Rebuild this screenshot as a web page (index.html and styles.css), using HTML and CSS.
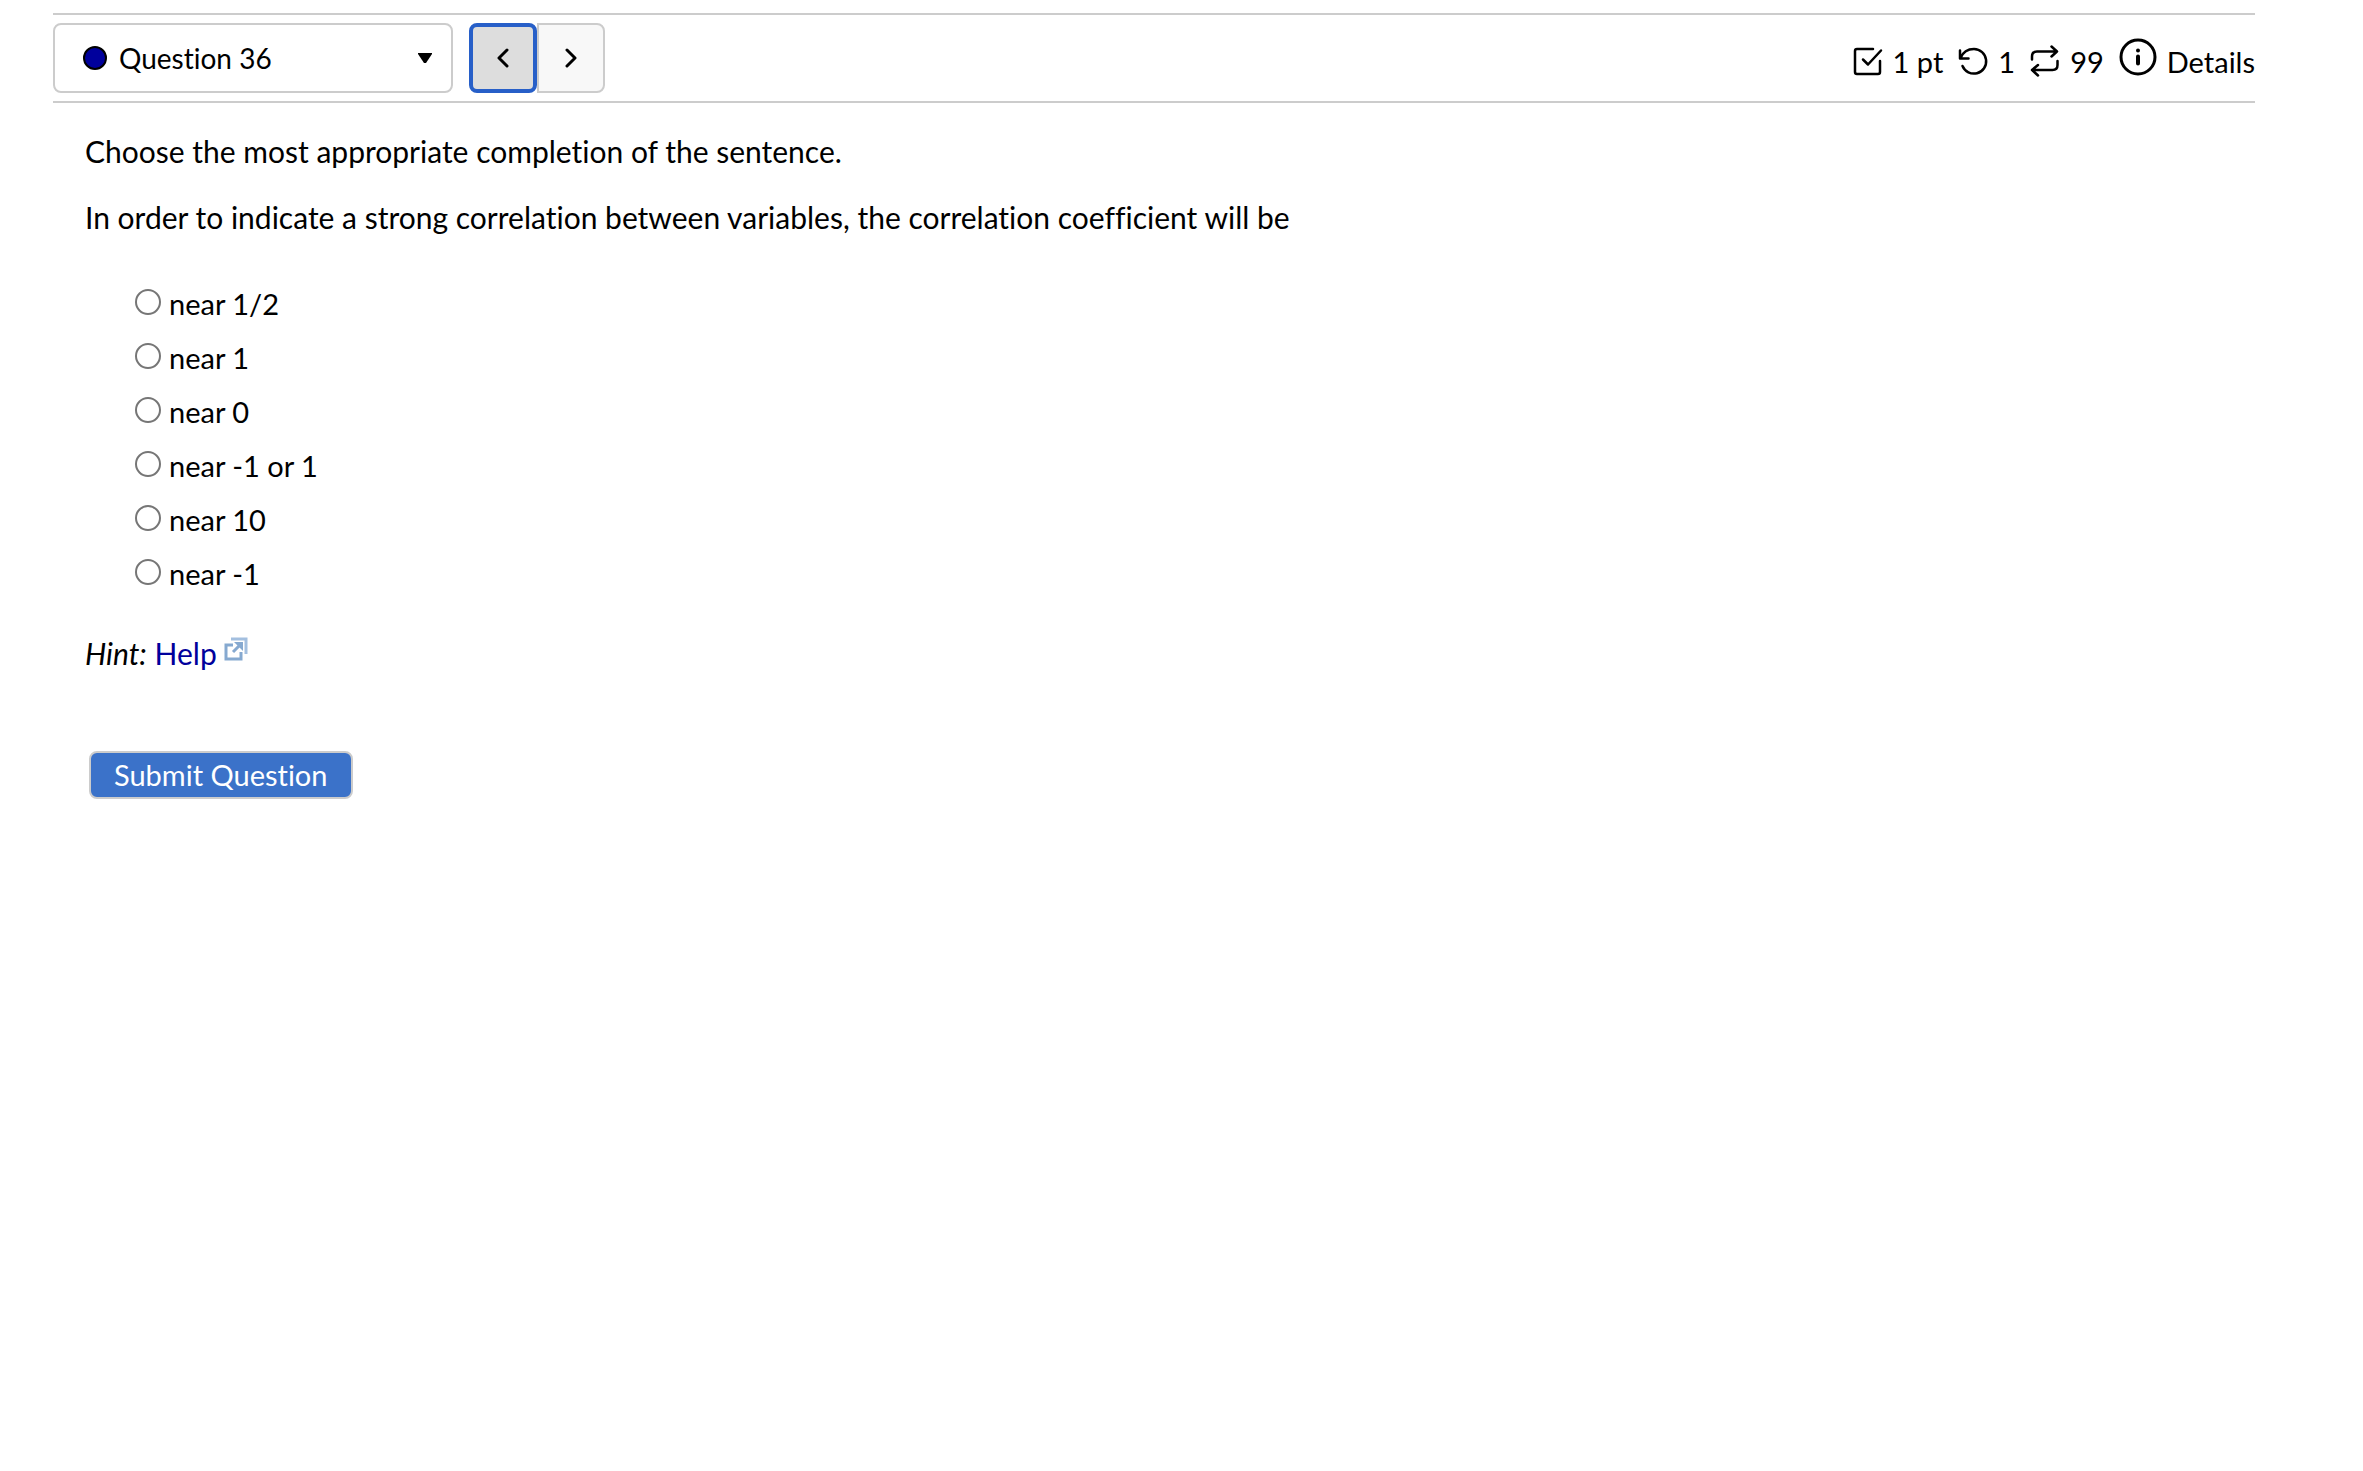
FILE: index.html
```html
<!DOCTYPE html>
<html lang="en">
<head>
    <meta charset="UTF-8">
    <meta name="viewport" content="width=device-width, initial-scale=1.0">
    <title>Question 36</title>
    <link rel="stylesheet" href="styles.css">
</head>
<body>
    <!-- Question navigation and score details -->
    <header class="question-bar">
        <div class="question-select">
            <span class="status-dot"></span>
            <select id="question" aria-label="Select question">
                <option>Question 36</option>
            </select>
            <svg class="caret" viewBox="0 0 14 12" aria-hidden="true"><path d="M0 1h14v1L8 11H6L0 2z"/></svg>
        </div>

        <div class="nav-buttons">
            <button type="button" class="nav-button active" aria-label="Previous question">
                <svg viewBox="0 0 12 20" aria-hidden="true"><path d="M10 2L2 10l8 8"/></svg>
            </button>
            <button type="button" class="nav-button" aria-label="Next question">
                <svg viewBox="0 0 12 20" aria-hidden="true"><path d="M2 2l8 8-8 8"/></svg>
            </button>
        </div>

        <div class="score">
            <span class="score-item">
                <svg class="icon" viewBox="0 0 30 34" stroke-width="2.5" aria-hidden="true"><path d="M20 4H4Q2 4 2 6V27Q2 29 4 29H25Q27 29 27 27V16M10 14.500l5 5L28 5.500"/></svg>
                1 pt
            </span>
            <span class="score-item">
                <svg class="icon" viewBox="0 0 30 34" stroke-width="2.5" aria-hidden="true"><path d="M2 5.500v8h8.500M2.500 13C5 7 10 4 16 4a12.300 12.300 0 1 1-11.500 17"/></svg>
                1
            </span>
            <span class="score-item">
                <svg class="icon" viewBox="0 0 30 34" stroke-width="2.5" aria-hidden="true"><path d="M2 14.500v-3Q2 6.500 7 6.500H27M21.500 1.500l5.500 5-5.500 5M27.500 16v4q0 5-5 5H2M8 20l-6 5 6 5.500"/></svg>
                99
            </span>
            <button type="button" class="score-item details">
                <svg class="icon info" viewBox="0 0 38 38" stroke-width="3" aria-hidden="true"><circle cx="19" cy="19" r="17"/><path d="M19 18.500v7M19 12.500v.1" stroke-width="4"/></svg>
                Details
            </button>
        </div>
    </header>

    <!-- Question text and answers -->
    <main class="question">
        <p>Choose the most appropriate completion of the sentence.</p>
        <p id="prompt">In order to indicate a strong correlation between variables, the correlation coefficient will be</p>

        <ul class="choices" role="radiogroup" aria-labelledby="prompt">
            <li><input type="radio" name="answer" id="answer-0"><label for="answer-0">near 1/2</label></li>
            <li><input type="radio" name="answer" id="answer-1"><label for="answer-1">near 1</label></li>
            <li><input type="radio" name="answer" id="answer-2"><label for="answer-2">near 0</label></li>
            <li><input type="radio" name="answer" id="answer-3"><label for="answer-3">near -1 or 1</label></li>
            <li><input type="radio" name="answer" id="answer-4"><label for="answer-4">near 10</label></li>
            <li><input type="radio" name="answer" id="answer-5"><label for="answer-5">near -1</label></li>
        </ul>

        <p class="hint">
            <em>Hint:</em>
            <a href="#help">Help <svg class="external" viewBox="0 0 24 24" aria-hidden="true"><path class="frame" d="M9 8H2v14h15v-7"/><path class="corner" d="M7 2h15v15"/><path class="arrow" d="M9 15l7-7"/><path class="head" d="M10 5h9v9z"/></svg></a>
        </p>

        <button type="button" class="submit">Submit Question</button>
    </main>
</body>
</html>
```
FILE: styles.css
```css
body {
    margin: 13px 108px 0 53px;
    font-family: "Trebuchet MS", Lato, sans-serif;
    font-size: 29px;
    font-variant-ligatures: none;
    line-height: 36px;
    color: #000;
    background: #fff;
}

button, select {
    font: inherit;
    color: inherit;
    cursor: pointer;
}

/* Top bar */
.question-bar {
    display: flex;
    align-items: center;
    padding: 8px 0;
    border-top: 2px solid #ccc;
    border-bottom: 2px solid #ccc;
}

.question-select {
    display: flex;
    align-items: center;
    box-sizing: border-box;
    width: 400px;
    height: 70px;
    padding: 0 19px 0 28px;
    border: 2px solid #ccc;
    border-radius: 8px;
}

.status-dot {
    box-sizing: border-box;
    width: 24px;
    height: 24px;
    border: 2px solid #000;
    border-radius: 50%;
    background: #00009c;
}

.question-select select {
    flex: 1;
    padding: 0 0 0 12px;
    border: none;
    font-size: 28px;
    font-variant-ligatures: none;
    background: none;
    appearance: none;
}

.caret {
    width: 14px;
    height: 12px;
}

.nav-buttons {
    display: flex;
    margin-left: 16px;
}

.nav-button {
    display: flex;
    align-items: center;
    justify-content: center;
    width: 68px;
    height: 70px;
    padding: 0;
    border: 2px solid #ccc;
    border-radius: 0 8px 8px 0;
    background: #f8f8f8;
}

.nav-button.active {
    border: 4px solid #275fc8;
    border-radius: 8px;
    background: #ddd;
}

.nav-button svg {
    width: 12px;
    height: 20px;
    fill: none;
    stroke: #000;
    stroke-width: 3;
    stroke-linecap: round;
    stroke-linejoin: round;
}

/* Points, tries and versions */
.score {
    display: flex;
    align-items: center;
    gap: 15px;
    margin-left: auto;
    padding-top: 8px;
}

.score-item {
    display: flex;
    align-items: center;
    gap: 10px;
}

.icon {
    width: 30px;
    height: 34px;
    fill: none;
    stroke: #000;
    stroke-linecap: round;
    stroke-linejoin: round;
}

.icon.info {
    width: 38px;
    height: 38px;
    margin-bottom: 10px;
}

.details {
    padding: 0;
    border: none;
    background: none;
}

/* Question body */
.question {
    padding: 30px 32px;
}

.question p {
    margin: 0 0 30px;
    font-size: 30px;
}

.choices {
    margin: 0;
    padding: 12px 0 0 50px;
    list-style: none;
}

.choices li {
    display: flex;
    align-items: center;
    gap: 8px;
    height: 54px;
}

.choices input {
    appearance: none;
    box-sizing: border-box;
    width: 26px;
    height: 26px;
    margin: 0 0 4px;
    border: 2px solid #767676;
    border-radius: 50%;
    background: #fff;
}

.choices input:checked {
    background: radial-gradient(#275fc8 50%, #fff 55%);
}

.question .hint {
    margin: 34px 0 80px;
}

.hint a {
    color: #00009c;
    text-decoration: none;
}

.external {
    width: 24px;
    height: 24px;
    vertical-align: 4px;
    fill: none;
    stroke: #86a9d0;
    stroke-width: 3;
}

.external .corner {
    stroke: #a3bfdf;
}

.external .head {
    fill: #86a9d0;
    stroke: none;
}

.submit {
    margin-left: 4px;
    padding: 4px 23px;
    border: 2px solid #ccc;
    border-radius: 8px;
    color: #fff;
    background: #3b72c9;
}
```
